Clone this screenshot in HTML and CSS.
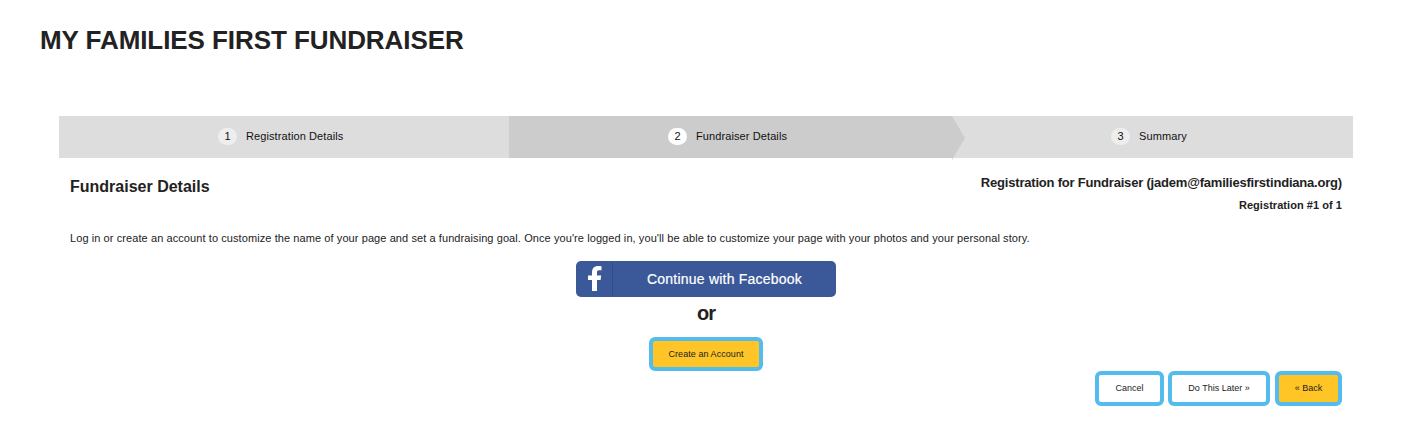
FILE: index.html
```html
<!DOCTYPE html>
<html lang="en">

<head>
    <meta charset="UTF-8">
    <meta name="viewport" content="width=device-width, initial-scale=1.0">
    <title>My Families First Fundraiser</title>
    <link rel="stylesheet" href="styles.css">
</head>

<body>
    <h1 class="page-title">MY FAMILIES FIRST FUNDRAISER</h1>
    <div class="content">
        <ol class="steps">
            <li class="step step-one"><span class="num">1</span><span class="label">Registration Details</span></li>
            <li class="step step-two active"><span class="num">2</span><span class="label">Fundraiser Details</span></li>
            <li class="step step-three"><span class="num">3</span><span class="label">Summary</span></li>
        </ol>
        <div class="inner">
            <div class="heading">
                <h2 class="section-title">Fundraiser Details</h2>
                <div class="registration">
                    <div class="reg-name">Registration for Fundraiser (jadem@familiesfirstindiana.org)</div>
                    <div class="reg-count">Registration #1 of 1</div>
                </div>
            </div>
            <p class="intro">Log in or create an account to customize the name of your page and set a fundraising goal. Once you're logged in, you'll be able to customize your page with your photos and your personal story.</p>
            <div class="login">
                <button class="facebook">
                    <span class="fb-icon">
                        <svg width="14" height="25" viewBox="0 0 14 25">
                            <path fill="#fff" d="M4 25V14H0V9.500h4V6.400C4 2.200 6.400 0 10.100 0c1.600 0 2.900.1 3.400.2v4.100h-2.400C9.300 4.300 9 5.200 9 6.500v3h4.200L12.600 14H9v11z" />
                        </svg>
                    </span>
                    <span class="fb-text">Continue with Facebook</span>
                </button>
                <div class="or">or</div>
                <button class="btn btn-yellow btn-create">Create an Account</button>
            </div>
            <div class="actions">
                <button class="btn btn-cancel">Cancel</button>
                <button class="btn btn-later">Do This Later »</button>
                <button class="btn btn-yellow btn-back">« Back</button>
            </div>
        </div>
    </div>
</body>

</html>
```
FILE: styles.css
```css
* {
    box-sizing: border-box;
}

body {
    margin: 0;
    color: #222;
    background-color: #fff;
    font-family: Arial, "Liberation Sans", sans-serif;
}

button {
    font-family: inherit;
    padding: 0;
    white-space: nowrap;
}

.page-title {
    margin: 0;
    padding: 24px 0 0 40px;
    font-size: 26px;
    line-height: 32px;
    letter-spacing: -0.07px;
}

.content {
    width: 1294px;
    margin: 60px 0 0 59px;
}

.steps {
    display: flex;
    height: 42px;
    margin: 0;
    padding: 0;
    list-style: none;
    background-color: #ddd;
}

.step {
    position: relative;
    display: flex;
    align-items: center;
    gap: 9px;
    padding-bottom: 1px;
    color: #111;
    font-size: 11px;
    letter-spacing: 0.1px;
}

.step-one {
    width: 450px;
    padding-left: 159px;
}

.step-two {
    width: 443px;
    padding-left: 159px;
}

.step-three {
    flex: 1;
    padding-left: 159px;
}

.num {
    width: 19px;
    height: 17px;
    border-radius: 9px;
    background-color: #eee;
    line-height: 17px;
    text-align: center;
}

.label {
    line-height: 17px;
}

.active {
    background-color: #ccc;
}

.active .num {
    background-color: #fff;
}

/* arrow pointing at the next step */
.active::after {
    content: "";
    position: absolute;
    top: 0;
    left: 100%;
    border-top: 22px solid transparent;
    border-bottom: 22px solid transparent;
    border-left: 13px solid #ccc;
}

.inner {
    padding: 0 11px;
}

.heading {
    display: flex;
    justify-content: space-between;
    height: 70px;
    padding-top: 15px;
}

.section-title {
    margin: 4px 0 0;
    font-size: 16px;
    line-height: 20px;
}

.registration {
    font-weight: bold;
    text-align: right;
}

.reg-name {
    font-size: 13px;
    line-height: 19px;
    letter-spacing: -0.2px;
}

.reg-count {
    margin-top: 5px;
    font-size: 11px;
    line-height: 16px;
    letter-spacing: 0.05px;
}

.intro {
    margin: 0;
    height: 33px;
    font-size: 11px;
    line-height: 20px;
    letter-spacing: 0.085px;
    white-space: nowrap;
}

.login {
    display: flex;
    flex-direction: column;
    align-items: center;
}

.facebook {
    display: flex;
    width: 260px;
    height: 36px;
    border: 0;
    border-radius: 5px;
    color: #fff;
    background-color: #3b5998;
}

.fb-icon {
    width: 37px;
    height: 34px;
    margin-top: 1px;
    padding: 4px 0 0 12px;
    border-right: 1px solid #334d84;
    text-align: left;
}

.fb-icon svg {
    display: block;
}

.fb-text {
    flex: 1;
    font-size: 14px;
    line-height: 36px;
    letter-spacing: 0.22px;
    text-align: center;
    -webkit-text-stroke: 0.2px #fff;
}

.or {
    height: 40px;
    font-size: 20px;
    font-weight: bold;
    line-height: 32px;
    letter-spacing: -0.9px;
}

.btn {
    height: 34px;
    border: 4px solid #54bcec;
    border-radius: 6px;
    color: #222;
    background-color: #fff;
    font-size: 9px;
}

.btn-yellow {
    background-color: #ffc425;
}

.btn-create {
    width: 114px;
    letter-spacing: 0.06px;
}

.actions {
    display: flex;
    justify-content: flex-end;
}

.actions .btn {
    height: 35px;
    padding-bottom: 1px;
}

.btn-cancel {
    width: 69px;
}

.btn-later {
    width: 102px;
    margin-left: 4px;
}

.btn-back {
    width: 67px;
    margin-left: 5px;
}
```
